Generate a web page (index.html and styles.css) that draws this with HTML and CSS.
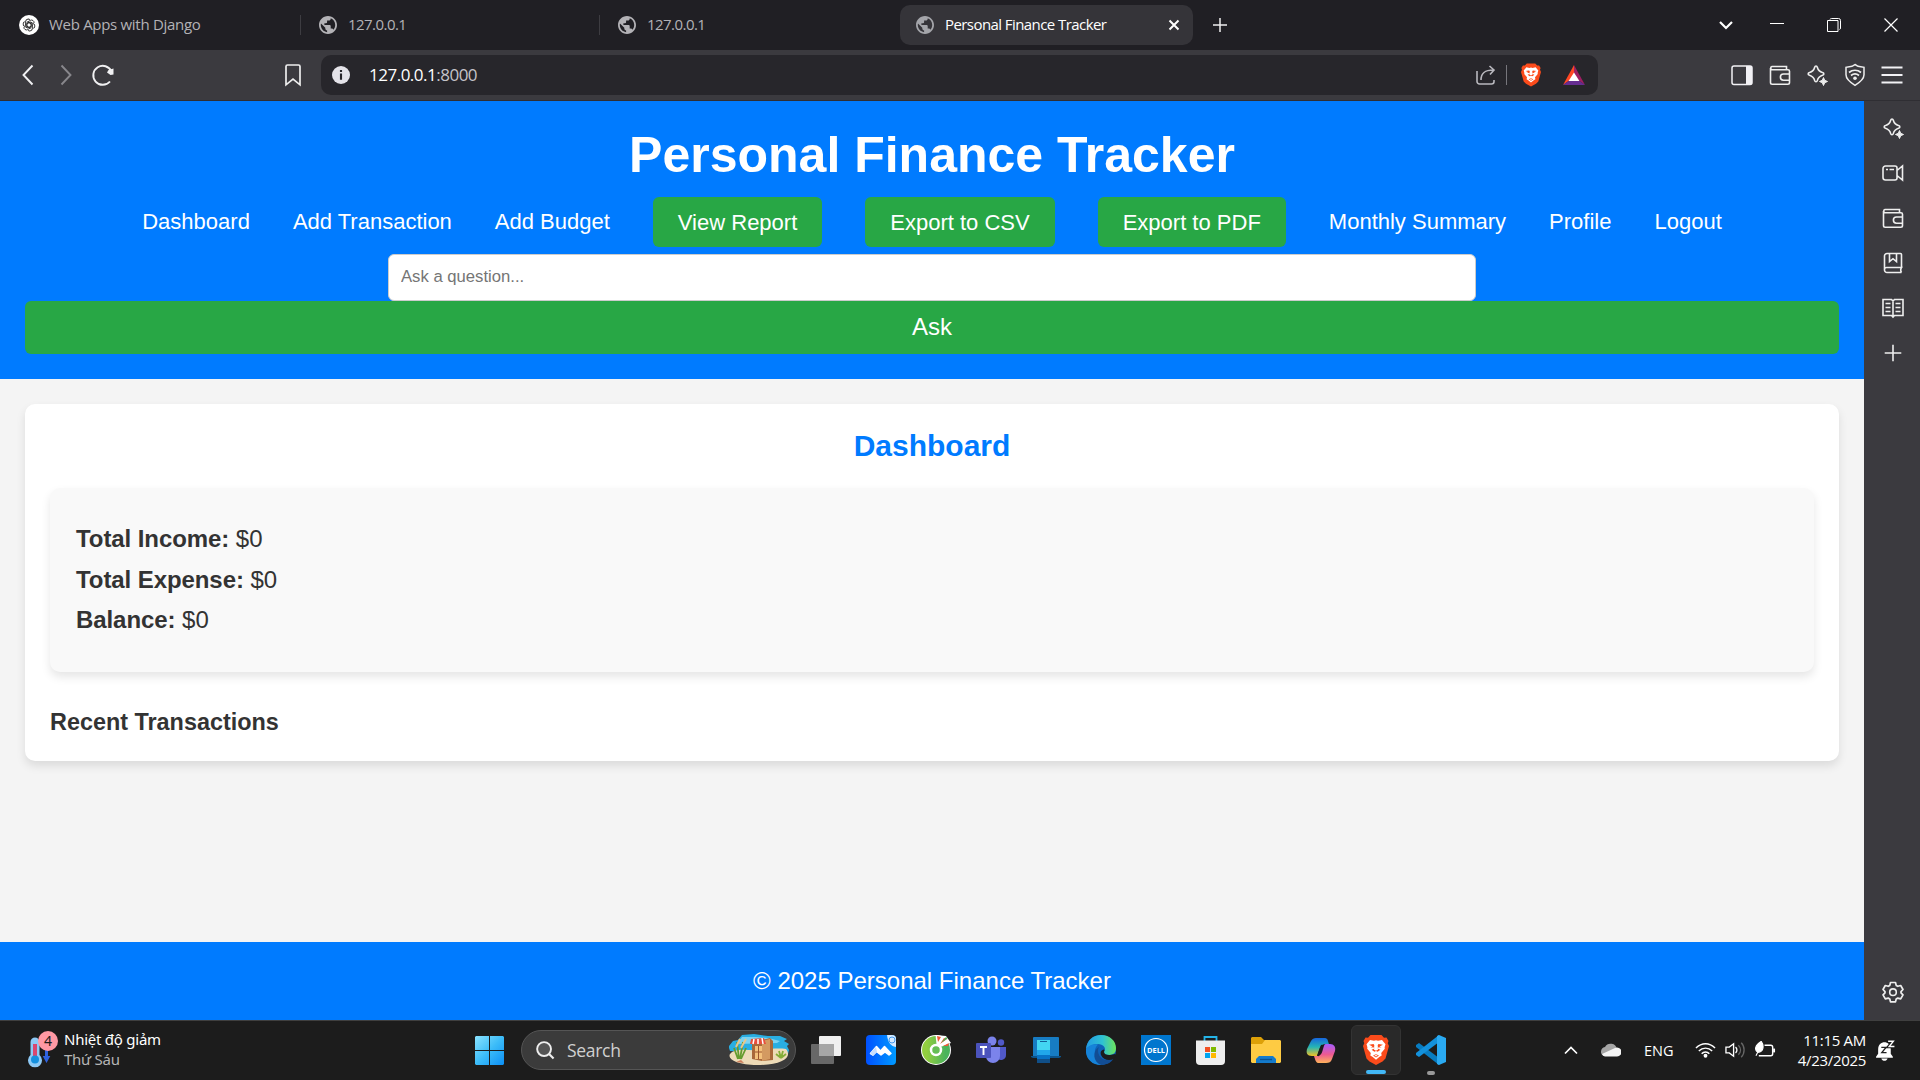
FILE: index.html
```html
<!DOCTYPE html>
<html lang="en">
<head>
<meta charset="utf-8">
<title>Personal Finance Tracker</title>
<link rel="stylesheet" href="styles.css">
</head>
<body>
<svg class="defs" width="0" height="0" aria-hidden="true">
  <defs>
    <symbol id="globe" viewBox="2 2 20 20">
      <path fill="currentColor" d="M12 2C6.480 2 2 6.480 2 12s4.480 10 10 10 10-4.480 10-10S17.520 2 12 2zm-1 17.930c-3.950-.490-7-3.850-7-7.930 0-.620.080-1.210.210-1.790L9 15v1c0 1.100.9 2 2 2v1.930zm6.900-2.540c-.260-.810-1-1.390-1.900-1.390h-1v-3c0-.550-.450-1-1-1H8v-2h2c.550 0 1-.450 1-1V7h2c1.100 0 2-.9 2-2v-.410c2.930 1.190 5 4.060 5 7.410 0 2.080-.8 3.970-2.100 5.390z"/>
    </symbol>
    <symbol id="sparkle" viewBox="0 0 24 24">
      <path d="M11 3c.7 0 1.100.5 1.300 1.200.9 3.300 1.900 4.300 5.200 5.300 1.800.5 1.800 2.300 0 2.800-3.300 1-4.300 2-5.200 5.300-.4 1.600-2.200 1.600-2.600 0-.9-3.300-1.900-4.300-5.200-5.300-1.800-.5-1.800-2.300 0-2.800 3.300-1 4.300-2 5.200-5.300C9.900 3.500 10.300 3 11 3z" fill="none" stroke="currentColor" stroke-width="1.600"/>
      <path d="M18.500 14.500l1.200 2.800 2.800 1.200-2.800 1.200-1.200 2.800-1.200-2.800-2.800-1.200 2.800-1.200z" fill="currentColor" stroke="currentColor"/>
    </symbol>
    <symbol id="wallet" viewBox="0 0 24 24">
      <path d="M2.500 5v14.500a1.700 1.700 0 0 0 1.700 1.700h15.600a1.700 1.700 0 0 0 1.700-1.700V8.300a1.500 1.500 0 0 0-1.500-1.500H4A1.700 1.700 0 0 1 4 3.500h14.500v3M21.500 11h-6a3 3 0 0 0 0 6.200h6" fill="none" stroke="currentColor" stroke-width="1.600"/>
    </symbol>
    <symbol id="lion" viewBox="0 0 26 30">
      <path d="M7.500 0h11l2.500 2.800 2.500-.3L25.500 6l-.8 2.200L26 11l-3.500 12.500-3 3L13 30l-6.500-3.500-3-3L0 11l1.300-2.800L.5 6l2-3.500 2.500.3z" fill="#fb4b1b"/>
      <path d="M7 5l4 .8 2-.6 2 .6 4-.8 3.500 4.300-.9 3 .2 1.500-3.600 4.200.5 2.500-2.500 1.500-3.200 2.800-3.200-2.800-2.500-1.500.5-2.500-3.600-4.200.2-1.500-.9-3z" fill="#fff"/>
      <path d="M6 9.800l4.500-.8.900 1.200-.5 4.300 2.100 1.300 2.100-1.300-.5-4.300.9-1.200 4.500.8-3.600 1.600 2.200.9-4 .2v1l2.800 1.200-4.400 3.200-4.400-3.200 2.800-1.200v-1l-4-.2 2.200-.9z" fill="#fb4b1b"/>
      <path d="M13 16l-2.600 1.200 2.600 2 2.600-2zM11.800 10h2.400l.3 4-1.500 1-1.500-1z" fill="#fff"/>
      <path d="M10 20.500l3-1.300 3 1.300-3 2z" fill="#fb4b1b"/><path d="M11.300 20.600l1.700-.7 1.700.7-1.700 1z" fill="#fff"/>
    </symbol>
  </defs>
</svg>

<div class="tabstrip">
  <div class="tab">
    <svg class="fav gpt" viewBox="0 0 20 20"><circle cx="10" cy="10" r="10" fill="#fff"/><g fill="none" stroke="#222" stroke-width=".9"><path id="petal" d="M8 12.800V7.300l3.300-1.900a2.500 2.500 0 0 1 3.700 2.600"/><use href="#petal" transform="rotate(60 10 10)"/><use href="#petal" transform="rotate(120 10 10)"/><use href="#petal" transform="rotate(180 10 10)"/><use href="#petal" transform="rotate(240 10 10)"/><use href="#petal" transform="rotate(300 10 10)"/></g></svg>
    <span class="tab-title t-first">Web Apps with Django</span>
  </div>
  <div class="tab second"><svg class="fav globe"><use href="#globe"/></svg><span class="tab-title t-ip">127.0.0.1</span></div>
  <div class="tab last"><svg class="fav globe"><use href="#globe"/></svg><span class="tab-title t-ip">127.0.0.1</span></div>
  <div class="tab active"><svg class="fav globe"><use href="#globe"/></svg><span class="tab-title t-main">Personal Finance Tracker</span>
    <svg class="tab-close" viewBox="0 0 12 12"><path d="M1.500 1.500l9 9m0-9l-9 9" stroke="#fff" stroke-width="2"/></svg>
  </div>
  <svg class="newtab" viewBox="0 0 14 14"><path d="M7 0v14M0 7h14" stroke="#eee" stroke-width="1.500"/></svg>
  <div class="winctl">
    <svg viewBox="0 0 14 14"><path d="M1 4l6 6 6-6" fill="none" stroke="#fff" stroke-width="2.200"/></svg>
    <svg viewBox="0 0 14 14"><path d="M0 5.500h14" stroke="#fff"/></svg>
    <svg viewBox="0 0 14 14"><path d="M.5 2.500h10.500v11H.5zM3 1.500A1.500 1.500 0 0 1 4.500.5h7a2 2 0 0 1 2 2v7.500a1.500 1.500 0 0 1-1 1.500" fill="none" stroke="#fff"/></svg>
    <svg viewBox="0 0 14 14"><path d="M.5.5l13 13m0-13l-13 13" stroke="#fff" stroke-width="1.200"/></svg>
  </div>
</div>

<div class="toolbar">
  <div class="nav-icons">
    <svg viewBox="0 0 24 24"><path d="M16.500 2.500L7.500 12l9 9.500" fill="none" stroke="#f0f0f2" stroke-width="1.900"/></svg>
    <svg class="dim" viewBox="0 0 24 24"><path d="M7.500 2.500l9 9.500-9 9.500" fill="none" stroke="#88878c" stroke-width="1.900"/></svg>
    <svg viewBox="0 0 24 24"><path d="M19 18.500A9.500 9.500 0 1 1 20.500 8.500" fill="none" stroke="#f0f0f2" stroke-width="1.900"/><path d="M22.500 5.500v6l-3 .5-3.500-2.500 1.500-2.500z" fill="#f0f0f2"/></svg>
  </div>
  <svg class="bookmark" viewBox="0 0 24 24"><path d="M5 3.500a1.500 1.500 0 0 1 1.500-1.500h11A1.500 1.500 0 0 1 19 3.500v18.300l-7-5.800-7 5.800z" fill="none" stroke="#eee" stroke-width="1.700"/></svg>
  <div class="address">
    <svg class="info" viewBox="0 0 17 17"><circle cx="8.500" cy="8.500" r="8.500" fill="#e4e3e9"/><path d="M8.500 7v6M8.500 3.700v2" stroke="#27262b" stroke-width="2"/></svg>
    <span class="url"><b>127.0.0.1</b>:8000</span>
    <svg class="share" viewBox="0 0 20 20"><path d="M1 6v10.500A2.500 2.500 0 0 0 3.500 19h12a2.500 2.500 0 0 0 2.500-2.500V15M5 15c0-6.500 3-10 12.500-10M13.500 1l4.500 4-4 4.500" fill="none" stroke="#b9b8be" stroke-width="1.600"/></svg>
    <span class="divider"></span>
    <svg class="shield"><use href="#lion"/></svg>
    <svg class="bat" viewBox="0 0 22 20"><path d="M11 0L0 20l11-8z" fill="#ff4724"/><path d="M11 0l11 20-11-8z" fill="#9e1f63"/><path d="M0 20h22l-11-8z" fill="#662d91"/><path d="M11 7.500l5.400 8.500H5.600z" fill="#fff"/></svg>
  </div>
  <div class="actions">
    <svg viewBox="0 0 24 24"><rect x="2" y="3" width="20" height="18.500" rx="2" fill="none" stroke="#f2f1f5" stroke-width="1.500"/><path d="M16 3h5a1 1 0 0 1 1 1v16.500a1 1 0 0 1-1 1h-5z" fill="#f2f1f5"/></svg>
    <svg><use href="#wallet"/></svg>
    <svg><use href="#sparkle"/></svg>
    <svg viewBox="0 0 24 24"><path d="M12 1.500l3 1.800 6 1v7.500c0 4.500-4 7.500-9 10.500-5-3-9-6-9-10.500V4.300l6-1z" fill="none" stroke="#eee" stroke-width="1.500"/><path d="M6 9.500c3.500-3 8.500-3 12 0M8 12.500c2.500-2 5.500-2 8 0" fill="none" stroke="#eee" stroke-width="1.700"/><circle cx="12" cy="15.200" r="1.800" fill="#eee"/></svg>
    <svg viewBox="0 0 24 24"><path d="M1.500 4.500h21M1.500 12h21M1.500 19.500h21" stroke="#f2f1f5" stroke-width="1.800"/></svg>
  </div>
</div>

<div class="browser-body">
  <div class="page">
    <header>
      <h1>Personal Finance Tracker</h1>
      <nav>
        <a>Dashboard</a><a>Add Transaction</a><a>Add Budget</a>
        <a class="btn">View Report</a><a class="btn">Export to CSV</a><a class="btn">Export to PDF</a>
        <a>Monthly Summary</a><a>Profile</a><a>Logout</a>
      </nav>
      <input class="question" type="text" placeholder="Ask a question...">
      <button class="ask">Ask</button>
    </header>
    <main>
      <section class="card">
        <h2>Dashboard</h2>
        <div class="summary">
          <p><strong>Total Income:</strong> $0</p>
          <p><strong>Total Expense:</strong> $0</p>
          <p><strong>Balance:</strong> $0</p>
        </div>
        <h3>Recent Transactions</h3>
      </section>
    </main>
    <footer>© 2025 Personal Finance Tracker</footer>
  </div>
  <aside>
    <svg><use href="#sparkle"/></svg>
    <svg viewBox="0 0 24 24"><path d="M4.500 5H14a2 2 0 0 1 2 2v10a2 2 0 0 1-2 2H4.500a2.500 2.500 0 0 1-2.500-2.500v-9A2.500 2.500 0 0 1 4.500 5zM16 9.500L21.500 5v14L16 14.500" fill="none" stroke="currentColor" stroke-width="1.600"/><path d="M5 8.500h2M8.500 8.500H13" stroke="currentColor" stroke-width="1.500"/></svg>
    <svg><use href="#wallet"/></svg>
    <svg viewBox="0 0 24 24"><path d="M20.500 16.500V3.500a1 1 0 0 0-1-1H6a2.500 2.500 0 0 0-2.500 2.500v14A2.500 2.500 0 0 0 6 21.500h14.500M3.500 18.500a2 2 0 0 1 2-2h15c-1 1.600-1 3.400 0 5M8.500 2.500v8l3.500-2.800 3.500 2.800v-8" fill="none" stroke="currentColor" stroke-width="1.600"/></svg>
    <svg viewBox="0 0 24 24"><path d="M12 4v17M2 3.500h8.500L12 5l1.500-1.500H22v16h-8.500L12 21l-1.500-1.500H2z" fill="none" stroke="currentColor" stroke-width="1.600"/><path d="M4.500 7.500h5M4.500 11.500h5M4.500 15.500h5M14.500 7.500h5M14.500 11.500h5M14.500 15.500h5" stroke="currentColor" stroke-width="1.600"/></svg>
    <svg viewBox="0 0 24 24"><path d="M12 3.700v16.600M3.700 12h16.600" stroke="currentColor" stroke-width="1.600"/></svg>
    <svg class="gear" viewBox="0 0 24 24"><path d="M9.500 2.500h5l.7 2.900 1.600.9 2.900-.8 2.300 4-2 2.100v1.200l2 2.100-2.300 4-2.900-.8-1.600.9-.7 2.900h-5l-.7-2.900-1.600-.9-2.900.8-2.300-4 2-2.100v-1.200l-2-2.100 2.300-4 2.900.8 1.600-.9z" fill="none" stroke="currentColor" stroke-width="1.700" stroke-linejoin="round"/><circle cx="12" cy="12.200" r="3.300" fill="none" stroke="currentColor" stroke-width="1.600"/></svg>
  </aside>
</div>

<div class="taskbar">
  <div class="weather">
    <svg viewBox="0 0 32 38">
      <path d="M2.500 12a4.500 4.500 0 0 1 9 0v13a7 7 0 1 1-9 0z" fill="#8ec9f5"/><rect x="5" y="14" width="4" height="14" fill="#d9466f"/><circle cx="7" cy="29.500" r="4" fill="#1490df"/>
      <path d="M17 18h3v8h2.300l-3.800 7-3.800-7H17z" fill="#2f62e0"/>
      <circle cx="20" cy="11" r="10" fill="#ff99a4"/><text x="20" y="16" text-anchor="middle" font-size="14" fill="#1c1c1c">4</text>
    </svg>
    <div><div class="w1">Nhiệt độ giảm</div><div class="w2">Thứ Sáu</div></div>
  </div>
  <svg class="start" viewBox="0 0 29 29"><defs><linearGradient id="win" gradientUnits="userSpaceOnUse" x1="0" y1="0" x2="29" y2="29"><stop offset="0" stop-color="#8be3ff"/><stop offset=".5" stop-color="#3cbcf8"/><stop offset="1" stop-color="#0c8ff5"/></linearGradient></defs><path d="M1 0h13v14H0V1zM15 0h13l1 1v13H15zM0 15h14v14H1l-1-1zM15 15h14v13l-1 1H15z" fill="url(#win)"/></svg>
  <div class="search">
    <svg class="lens" viewBox="0 0 20 20"><circle cx="8.500" cy="8.500" r="7.300" fill="#555" stroke="#eee" stroke-width="2"/><path d="M13.500 13.500l5 5" stroke="#eee" stroke-width="2.200"/></svg>
    <span class="search-text">Search</span>
    <svg class="beach" viewBox="0 0 61 32">
      <path d="M1 12l4-5 5-1 4-5 12-1 14 2 12 0 7 3-3 2 5 3-2 2 2 4-1 4-58-3-1-3z" fill="#29aee2"/><path d="M14 3l14 0 12 1 12 3-3 2-40 1z" fill="#7cd3f1"/>
      <path d="M4 18c9-4 18-1 26-2 11-1 20-2 28-1 7 9-4 16-29 16C10 31-1 25 2 20z" fill="#eddbb7"/>
      <path d="M34 6l8-2 3 3v19l-11 1-10-2V9z" fill="#a9683a"/><path d="M34 7l8-2v20l-8 2z" fill="#d49a61"/><path d="M27 12h7v13h-7z" fill="#f4c17c"/><path d="M30.500 12v13M27 18h7" stroke="#9c552d"/>
      <path d="M23 5l13-1 2 6H22z" fill="#e74f3c"/><path d="M26 5l-1 5M30 5v5M34 4l1 6" stroke="#fff" stroke-width="1.500"/>
      <path d="M10 25L6 14m5 11L9 8m3 17l3-17m-2 17l5-11" stroke="#659c2e" stroke-width="1.800"/><path d="M8 13L12 5m1 9l5-9" stroke="#e7c58b" stroke-width="2"/>
      <path d="M53 24l-5-4m5 4l-2-7m2 7l2-7m-2 7l5-4" stroke="#84ad38" stroke-width="1.800"/><path d="M8 28l5-2 3 3z" fill="#cb7d5b"/>
    </svg>
  </div>
  <div class="apps">
    <div class="app"><svg viewBox="0 0 30 30"><rect x="8" y="1" width="22" height="20" rx="1" fill="#f0f0f0"/><rect x="0" y="9" width="23" height="20" rx="1" fill="#686868"/><rect x="8" y="9" width="15" height="12" fill="#a6a6a6"/></svg></div>
    <div class="app"><svg viewBox="0 0 30 30"><defs><linearGradient id="mx"><stop stop-color="#0050ff"/><stop offset="1" stop-color="#009bff"/></linearGradient></defs><rect width="30" height="30" rx="4" fill="url(#mx)"/><path d="M21 0h5a4 4 0 0 1 4 4v8c-6-1-8-5-9-12z" fill="#d5eaff"/><circle cx="26" cy="5" r="3" fill="none" stroke="#4198ed"/><path d="M4.500 18.500l6-7 4 4.500 4-4.500 6.500 7-2 1.500-4-3-4 3-4.500-3.500-3.500 3.500z" fill="#fff" stroke="#fff" stroke-width="1.500" stroke-linejoin="round"/><path d="M4 18l6-6 1 5-4 4z" fill="#c9defd"/></svg></div>
    <div class="app"><svg viewBox="0 0 30 30"><defs><linearGradient id="coc"><stop stop-color="#92ce3f"/><stop offset="1" stop-color="#4bb35c"/></linearGradient></defs><circle cx="15" cy="15" r="15" fill="#fff"/><circle cx="15" cy="15" r="9.500" fill="none" stroke="url(#coc)" stroke-width="9"/><circle cx="15" cy="15" r="5" fill="#65be56" stroke="#fff" stroke-width="2.500"/><path d="M14.500 0l1 9 4 3L30 8 25 1z" fill="#fff"/><path d="M16 1l1 6 3-5zM19 9l4-6 3 1zM22 11l6-3-1 3z" fill="#ef5938"/><path d="M20 8l5-6 1.500 1.500z" fill="#4fb457"/></svg></div>
    <div class="app"><svg viewBox="0 0 30 30"><circle cx="16" cy="6" r="4.500" fill="#7b83eb"/><circle cx="25" cy="7.500" r="3.200" fill="#5059c9"/><path d="M21 12h9v8a5 5 0 0 1-9 3z" fill="#5059c9"/><path d="M10 12h14v9a7 7 0 0 1-14 0z" fill="#7b83eb"/><rect x="0" y="8" width="15" height="15" rx="1" fill="#4b53bc"/><path d="M4 12h7M7.500 12v8" stroke="#fff" stroke-width="1.900"/></svg></div>
    <div class="app"><svg viewBox="0 0 30 30"><rect x="2" y="2" width="26" height="20" rx="1" fill="#177cc3"/><path d="M0 21h30v1l-2 1H2l-2-1z" fill="#0b548d"/><rect x="6" y="5" width="13" height="23" rx="1" fill="#21a7ea"/><path d="M6 5h13v10H6z" fill="#43d6f3"/><path d="M6 20h13v4H6z" fill="#0872c5"/><path d="M6 24h13v4H6z" fill="#104f88"/><path d="M9 6.500h7" stroke="#12609a"/></svg></div>
    <div class="app"><svg viewBox="0 0 30 30"><defs><linearGradient id="edge"><stop stop-color="#239be4"/><stop offset=".55" stop-color="#2fc2d2"/><stop offset="1" stop-color="#6de45a"/></linearGradient></defs><circle cx="15" cy="15" r="15" fill="#0e62b8"/><path d="M0 14C1 5 7 0 15 0c9 0 15 6 15 13 0 5-3 7-7 7-3 0-5-1-5-3 3-4-1-8-6-8-5 0-9 2-12 5z" fill="url(#edge)"/><path d="M0 14c3-4 7-5.500 12-4.500-3 3-3.500 6-3 9 1 6 4 9 8 11.300C6 31-1 23 0 14z" fill="#1683d9"/><path d="M13 12c-3 5 1 13 8 13 3 0 5-1 7-2-3 5-8 7-13 7-8-3-9-14-2-18z" fill="#124d94"/><path d="M18 17c0 3 5 4 11 2l1.500 2-2.500 3c-5 2-11 1-13-4-1-3 0-5 3-5.500 1 1 0 1.500 0 2.500z" fill="#1c1c1c"/></svg></div>
    <div class="app"><svg viewBox="0 0 30 30"><rect width="30" height="30" fill="#0076ce"/><circle cx="15" cy="15" r="11.500" fill="none" stroke="#fff" stroke-width="1.200"/><text x="15" y="17.800" font-size="7.500" font-weight="700" text-anchor="middle" textLength="18" lengthAdjust="spacingAndGlyphs" fill="#fff">DELL</text></svg></div>
    <div class="app"><svg viewBox="0 0 30 30"><path d="M8.500 7V2h12v5" fill="none" stroke="#24b4e8" stroke-width="1.800"/><path d="M0 5.500h29V26a4 4 0 0 1-4 4H4a4 4 0 0 1-4-4z" fill="#eee"/><path d="M9 12h5v5H9z" fill="#f25022"/><path d="M15 12h5v5h-5z" fill="#7fba00"/><path d="M9 18h5v5H9z" fill="#00a4ef"/><path d="M15 18h5v5h-5z" fill="#ffb900"/></svg></div>
    <div class="app"><svg viewBox="0 0 30 30"><path d="M0 3l1-1h9l3 3h16l1 3-30 5z" fill="#dda008"/><path d="M0 9h11l3-4h15l1 1v21l-1 1H1l-1-1z" fill="#fecb43"/><path d="M5 28v-4l3-3h14l3 3v4z" fill="#147bcc"/><path d="M9 24.500h12" stroke="#095291" stroke-width="1.300"/></svg></div>
    <div class="app"><svg viewBox="0 0 30 30"><defs><linearGradient id="cpl" x2="0" y2="1"><stop stop-color="#1766df"/><stop offset=".5" stop-color="#24b5b5"/><stop offset="1" stop-color="#f2c324"/></linearGradient><linearGradient id="cpr" x2="0" y2="1"><stop stop-color="#a65cff"/><stop offset=".55" stop-color="#ed5a91"/><stop offset="1" stop-color="#ffb35b"/></linearGradient></defs><path d="M10 3h9c3 0 3 4 4 6h-4c-3 0-5 2-6 6l-2 6H6c-5 0-6-3-5-7l4-8c1-2 3-3 5-3z" fill="url(#cpl)"/><path d="M20 9h4c4 0 6 3 5 7l-3 8c-1 3-3 4-6 4h-8c-2 0-3-4-4-7h3c4 0 5-3 6-7 1-3 1-5 3-5z" fill="url(#cpr)"/><path d="M16 10l-4 11" stroke="#1c1c1c" stroke-width="2"/></svg></div>
    <div class="app current"><svg class="brave"><use href="#lion"/></svg><span class="dot"></span></div>
    <div class="app running"><svg viewBox="0 0 30 30"><path d="M0 10l3-2 20 15v7L0 12z" fill="#087cc1"/><path d="M23 0v7L3 22l-3-2v-2z" fill="#1391dc"/><path d="M21 1l2-1 7 3v24l-7 3-2-1z" fill="#2aaaf2"/></svg><span class="dot"></span></div>
  </div>
  <div class="tray">
    <svg class="up" viewBox="0 0 16 16"><path d="M2 11.500l6-6 6 6" fill="none" stroke="#fff" stroke-width="1.700"/></svg>
    <svg class="cloud" viewBox="0 0 20 14"><path d="M0 8.500A5 5 0 0 1 4 4a6.500 6.500 0 0 1 12 2l-8 7H4a4 4 0 0 1-4-4.500z" fill="#a5a5a5"/><path d="M1 11L14 5a4.500 4.500 0 1 1 2 8.500H4a4 4 0 0 1-3-2.500z" fill="#f4f4f4"/></svg>
    <span class="lang">ENG</span>
    <svg class="wifi" viewBox="0 0 22 18"><path d="M1 7C7 1 15 1 21 7M4 10c4-4 10-4 14 0M7 13c2-2.500 6-2.500 8 0" fill="none" stroke="#fff" stroke-width="1.500"/><circle cx="11" cy="15" r="2" fill="#fff"/></svg>
    <svg class="sound" viewBox="0 0 22 18"><path d="M1 6h3.500L9 2.500v13L4.500 12H1z" fill="none" stroke="#fff" stroke-width="1.400"/><path d="M11 6c2 1.500 2 4.500 0 6" fill="none" stroke="#fff" stroke-width="1.400"/><path d="M14 4c3 3 3 7 0 10M17 1.500c4 4 4 11 0 15" fill="none" stroke="#666" stroke-width="1.400"/></svg>
    <svg class="battery" viewBox="0 0 22 18"><path d="M10 4h6.500a2 2 0 0 1 2 2v7a2 2 0 0 1-2 2H4" fill="none" stroke="#fff" stroke-width="1.500"/><path d="M19 7.500h2v4h-2z" fill="#fff"/><path d="M6.500 0c3 4 3 11-3.500 11.500C-1 9 0 4 6.500 0zM1 15l4.500-9" fill="#fff" stroke="#fff" stroke-width="1.200"/></svg>
    <div class="clock"><div class="time">11:15 AM</div><div class="date">4/23/2025</div></div>
    <svg class="bell" viewBox="0 0 18 20"><path d="M2 9c0-9 12-9 12 0v4l2 3v1H0v-1l2-3z" fill="#fff"/><path d="M5 17.500h6c-1 3-5 3-6 0z" fill="#fff"/><path d="M5 7h4.500l-4 5h4.500" fill="none" stroke="#222" stroke-width="1.300"/><path d="M11.500 1.200h5l-4 5h5" fill="none" stroke="#1c1c1c" stroke-width="3.500"/><path d="M11.500 1.200h5l-4 5h5" fill="none" stroke="#fff" stroke-width="1.300"/></svg>
  </div>
</div>
</body>
</html>
```
FILE: styles.css
```css
* { box-sizing: border-box; }
html, body { margin: 0; height: 100%; }
body {
  width: 1920px;
  height: 1080px;
  overflow: hidden;
  display: flex;
  flex-direction: column;
  background: #1c1c1c;
  font-family: "Open Sans", "Noto Sans", sans-serif;
}
svg { display: block; flex: none; }
.defs { position: absolute; }

/* Tab strip */
.tabstrip { height: 50px; flex: none; display: flex; align-items: center; background: #201f24; }
.tab { width: 299px; height: 40px; display: flex; align-items: center; padding-left: 19px; color: #b3b2b6; }
.tab:first-child { width: 301px; }
.tab.second { padding-left: 17px; }
.tab:not(.last, .active)::after { content: ""; width: 1px; height: 20px; background: #3d3c41; margin-left: auto; }
.tab.last { width: 300px; padding-left: 17px; }
.fav { width: 20px; height: 20px; }
.globe { width: 18px; height: 18px; margin: 0 1px; }
.tab-title { margin-left: 10px; padding-bottom: 2px; font-size: 15px; line-height: 20px; white-space: nowrap; }
.t-first { letter-spacing: -.3px; }
.t-ip { letter-spacing: -.55px; }
.t-main { letter-spacing: -.57px; }
.active { width: 293px; background: #353439; border-radius: 10px; color: #fff; padding-left: 15px; }
.active .fav { color: #a4a5aa; }
.tab-close { width: 12px; height: 12px; margin: 0 13px 0 auto; }
.newtab { width: 14px; height: 14px; margin-left: 20px; }
.winctl { margin-left: auto; padding-right: 22px; display: flex; gap: 43px; }
.winctl svg { width: 14px; height: 14px; }
.winctl svg:first-child { margin-right: -6px; }

/* Toolbar */
.toolbar { height: 51px; flex: none; display: flex; align-items: center; background: #3b3a3f; border-bottom: 1px solid #2f2e33; padding-left: 16px; }
.nav-icons { display: flex; gap: 13.500px; }
.nav-icons svg, .bookmark, .actions svg { width: 24px; height: 24px; }
.bookmark { margin-left: 166px; }
.address { width: 1277px; height: 40px; margin-left: 16px; border-radius: 10px; background: #27262b; display: flex; align-items: center; padding: 0 13px 0 11px; }
.info { width: 18px; height: 18px; }
.url { margin-left: 19px; padding-bottom: 2px; font-size: 17px; letter-spacing: -.5px; color: #c4c3c9; }
.url b { font-weight: 400; color: #fff; }
.share { width: 20px; height: 20px; margin-left: auto; }
.divider { width: 1px; height: 20px; background: #77767c; margin-left: 10px; }
.shield { width: 20px; height: 24px; margin-left: 14px; }
.bat { width: 22px; height: 20px; margin-left: 22px; }
.actions { margin-left: 132px; display: flex; gap: 13.500px; color: #eee; }

/* Site */
.browser-body { height: 919px; flex: none; display: flex; }
.page { width: 1864px; display: flex; flex-direction: column; background: #f4f4f4; font-family: Arial, "Liberation Sans", sans-serif; color: #333; }
header { height: 278px; flex: none; background: #007bff; color: #fff; padding: 25px; display: flex; flex-direction: column; align-items: center; }
h1 { margin: 0; font-size: 50px; line-height: 58px; }
nav { margin-top: 13px; height: 50px; display: flex; gap: 43px; font-size: 22px; line-height: 25px; align-items: flex-start; }
nav a { padding-top: 12px; white-space: nowrap; }
nav .btn { padding: 13px 25px 12px; background: #28a745; border-radius: 6px; }
.question { flex: none; margin-top: 7px; width: 1088px; height: 47px; border: 1px solid #ccc; border-radius: 6px; padding: 0 12px 2px; font: 16.670px Arial, "Liberation Sans", sans-serif; }
.question::placeholder { color: #757575; }
.ask { flex: none; width: 100%; height: 53px; padding: 0 0 2px; border: 0; border-radius: 6px; background: #28a745; color: #fff; font: 24px Arial, "Liberation Sans", sans-serif; }
main { flex: 1; padding: 25px; }
.card { height: 357px; padding: 25px; background: #fff; border-radius: 10px; box-shadow: 0 5px 10px rgba(0, 0, 0, .1); }
h2 { margin: 0 0 25px; font-size: 30px; line-height: 34px; text-align: center; color: #007bff; }
.summary { height: 184px; padding: 31px 26px; background: #f9f9f9; border-radius: 10px; box-shadow: 0 5px 10px rgba(0, 0, 0, .1); }
.summary p { margin: 0; font-size: 24px; line-height: 40.700px; }
.summary strong { letter-spacing: -.08px; }
h3 { margin: 37px 0 0; font-size: 23.400px; line-height: 27px; }
footer { height: 78px; flex: none; background: #007bff; color: #fff; font-size: 24px; line-height: 78px; text-align: center; }
aside { width: 56px; background: #3b3a3f; color: #eee; display: flex; flex-direction: column; align-items: center; gap: 21px; padding: 15px 0 16px 1px; }
aside svg { width: 24px; height: 24px; }
.gear { margin-top: auto; }

/* Taskbar */
.taskbar { height: 60px; flex: none; border-top: 1px solid #3f3f3f; padding-bottom: 1px; background: #1c1c1c; color: #fff; display: flex; align-items: center; }
.weather { width: 475px; padding-left: 28px; display: flex; gap: 3px; font: 15px/20px "Noto Sans", sans-serif; }
.weather svg { width: 32px; height: 38px; margin-top: -1px; }
.w1, .w2 { letter-spacing: -.25px; white-space: nowrap; margin-left: 1px; }
.weather > div { margin-top: -2px; }
.w2 { color: #b5b5b5; }
.start { width: 29px; height: 29px; }
.search { width: 275px; height: 40px; margin-left: 17px; border: 1px solid #555; border-radius: 20px; background: #3b3b3b; display: flex; align-items: center; padding: 0 6px 0 14px; }
.lens { width: 19px; height: 19px; }
.search-text { margin-left: 12px; font-size: 17.500px; letter-spacing: -.3px; color: #d0d0d0; }
.beach { width: 61px; height: 32px; margin-left: auto; }
.apps { margin-left: 5px; display: flex; gap: 5px; }
.app { width: 50px; height: 50px; border-radius: 6px; display: flex; align-items: center; justify-content: center; position: relative; }
.app svg { width: 30px; height: 30px; }
.app .brave { width: 26px; }
.current { background: #292929; border: 1px solid #333; }
.dot { position: absolute; bottom: 0; left: 50%; width: 20px; height: 4px; margin-left: -10px; border-radius: 2px; background: #42b7f5; }
.running .dot { width: 8px; margin-left: -4px; background: #999; }
.tray { margin-left: auto; display: flex; align-items: center; padding-right: 25px; }
.up { width: 16px; height: 16px; }
.cloud { width: 20px; height: 14px; margin-left: 22px; }
.lang { width: 30px; margin-left: 23px; font-size: 14.500px; }
.wifi, .sound, .battery { width: 21px; height: 18px; }
.wifi { margin-left: 21px; }
.sound { margin-left: 9px; }
.battery { margin-left: 9px; }
.clock { width: 72px; margin-left: 18px; margin-top: -1px; text-align: right; font-size: 15px; line-height: 20px; white-space: nowrap; display: flex; flex-direction: column; align-items: flex-end; }
.time, .date { letter-spacing: -.3px; }
.bell { width: 19px; height: 21px; margin-left: 10px; }
```
